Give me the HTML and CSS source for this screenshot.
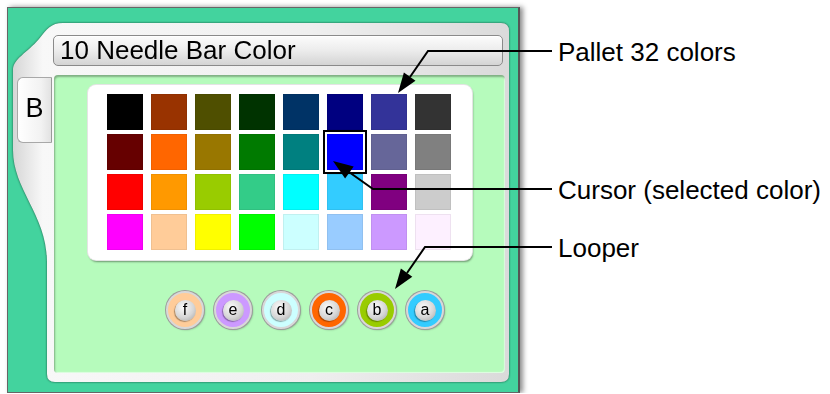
FILE: index.html
```html
<!DOCTYPE html>
<html lang="en">
<head>
    <meta charset="UTF-8">
    <meta name="viewport" content="width=device-width, initial-scale=1.0">
    <title>10 Needle Bar Color</title>
    <link rel="stylesheet" href="styles.css">
</head>
<body>
    <div class="screen">
        <div class="frame-wrap">
            <div class="frame">
                <div class="title">10 Needle Bar Color</div>
                <div class="tab">B</div>
                <div class="content">
                    <div class="palette" id="palette"></div>
                    <div class="loopers" id="loopers"></div>
                </div>
            </div>
        </div>
    </div>

    <div class="notes">
        <div class="note note-pallet">Pallet 32 colors</div>
        <div class="note note-cursor">Cursor (selected color)</div>
        <div class="note note-looper">Looper</div>
    </div>

    <svg class="arrows" width="830" height="394" viewBox="0 0 830 394">
        <polyline points="552,51 428,51 410,77" />
        <polygon points="398,93 415.5,80.8 403.9,72.6" />
        <polyline points="552,189 373,189 349,172" />
        <polygon points="333,161 353.7,166.4 345.1,178.6" />
        <polyline points="552,247 425,247 407,273" />
        <polygon points="395,289 412.3,276.8 400.9,268.6" />
    </svg>

    <script>
        const farben = [
            '#000000', '#993300', '#4f4f00', '#003300', '#003366', '#000080', '#333399', '#333333',
            '#660000', '#ff6600', '#997700', '#007a00', '#008080', '#0000ff', '#666699', '#808080',
            '#ff0000', '#ff9900', '#99cc00', '#33cc88', '#00ffff', '#33ccff', '#800080', '#cccccc',
            '#ff00ff', '#ffcc99', '#ffff00', '#00ff00', '#ccffff', '#99ccff', '#cc99ff', '#fdf0ff'
        ];
        const auswahl = 13;
        const looper = [
            ['f', '#ffcc99'], ['e', '#cc99ff'], ['d', '#ccffff'],
            ['c', '#ff6600'], ['b', '#99cc00'], ['a', '#33ccff']
        ];

        const palette = document.getElementById('palette');
        farben.forEach((farbe, index) => {
            const div = document.createElement('div');
            div.className = index === auswahl ? 'swatch selected' : 'swatch';
            div.style.background = farbe;
            palette.appendChild(div);
        });

        const loopers = document.getElementById('loopers');
        looper.forEach(([buchstabe, farbe]) => {
            const div = document.createElement('div');
            div.className = 'looper';
            div.style.background = farbe;
            div.innerHTML = `<span class="knob">${buchstabe}</span>`;
            loopers.appendChild(div);
        });
    </script>
</body>
</html>
```

FILE: styles.css
```css
body { margin: 0; position: relative; display: flex; align-items: flex-start; font-family: "Liberation Sans", Arial, sans-serif; background: #fff; color: #000; }

.screen { box-sizing: border-box; width: 513px; height: 386px; margin: 7px 0 0 7px; padding: 15px 0 0 5px; background: #43d39e; border: 1px solid #666; border-right: 2px solid #555; box-shadow: 3px 0 5px rgba(0, 0, 0, 0.45); }

.frame-wrap { filter: drop-shadow(0 0 1px rgba(0, 0, 0, 0.6)); }
.frame { box-sizing: border-box; width: 496px; height: 359px; padding: 12px 4px 9px 4px; display: grid; grid-template-columns: 35px 1fr; grid-template-rows: 31px 1fr; column-gap: 2px; row-gap: 9px; background: linear-gradient(90deg, #d6d6d6, #f8f8f8 6%, #efefef 60%, #dadada); clip-path: path("M0,47 C0,36 14,30 26,16 C34,6 38,0 50,0 L488,0 Q496,0 496,8 L496,351 Q496,359 488,359 L42,359 Q34,359 34,351 L34,239 C34,192 0,167 0,127 Z"); }

.title { grid-column: 2; grid-row: 1; box-sizing: border-box; height: 31px; margin: 0 2px 0 -1px; padding: 1px 6px 0; border: 1px solid #8a8a8a; border-radius: 5px; background: linear-gradient(#fcfcfc, #ececec 50%, #d4d4d4); font-size: 26px; line-height: 26px; box-shadow: inset 0 1px 0 #fff; }

.tab { grid-column: 1; grid-row: 2; align-self: start; box-sizing: border-box; height: 66px; margin-top: 2px; padding-top: 15px; text-align: center; border: 1px solid #a8a8a8; border-right-color: #999; border-radius: 6px 0 0 6px; background: linear-gradient(90deg, #ffffff, #f2f2f2 70%, #e2e2e2); font-size: 27px; line-height: 30px; }

.content { grid-column: 2; grid-row: 2; box-sizing: border-box; padding: 10px 0 0 34px; background: #b6fbbc; border-radius: 4px; box-shadow: inset 1px 2px 2px rgba(0, 0, 0, 0.3), inset -1px -1px 1px rgba(255, 255, 255, 0.6); }

.palette { box-sizing: border-box; width: 384px; height: 175px; padding: 9px 0 0 19px; display: grid; grid-template-columns: repeat(8, 36px); grid-auto-rows: 36px; gap: 4px 8px; background: #fff; border-radius: 8px; box-shadow: 0 0 0 1px #e4e4e4, 1px 2px 2px rgba(0, 0, 0, 0.4); }
.swatch { box-shadow: inset 0 0 0 1px rgba(0, 0, 0, 0.06); }
.swatch.selected { outline: 2px solid #000; outline-offset: 2px; }

.loopers { display: flex; gap: 10px; margin: 31px 0 0 78px; }
.looper { box-sizing: border-box; width: 38px; height: 38px; border-radius: 50%; border: 2px solid #d8d8d8; box-shadow: 0 0 0 1px #9c9c9c, 1px 1px 2px rgba(0, 0, 0, 0.3); display: flex; align-items: center; justify-content: center; }
.knob { box-sizing: border-box; width: 21px; height: 21px; border-radius: 50%; background: radial-gradient(circle at 40% 35%, #fbfbfb, #d6d6d6 55%, #a2a2a2); box-shadow: -1px 1px 1px rgba(0, 0, 0, 0.35); font-size: 16px; line-height: 20px; text-align: center; color: #000; }

.notes { margin-left: 38px; display: flex; flex-direction: column; }
.note { font-size: 26px; line-height: 30px; white-space: nowrap; }
.note-pallet { margin-top: 37px; }
.note-cursor { margin-top: 108px; }
.note-looper { margin-top: 28px; }

.arrows { position: absolute; left: 0; top: 0; pointer-events: none; }
.arrows polyline { fill: none; stroke: #000; stroke-width: 2; }
.arrows polygon { fill: #000; }
```
